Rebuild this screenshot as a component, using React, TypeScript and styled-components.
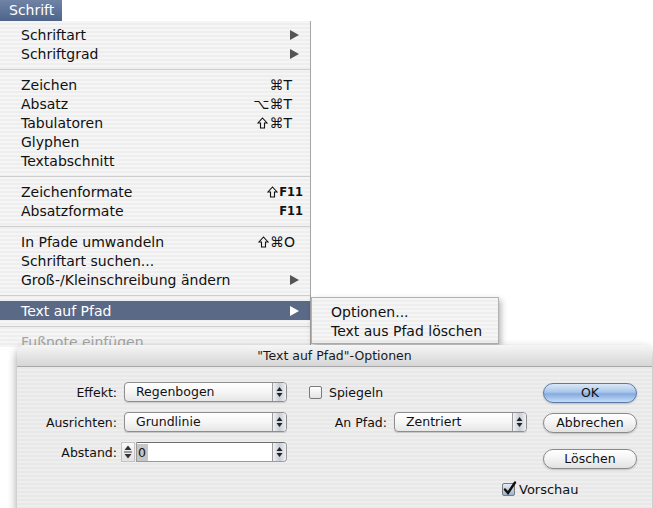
import styled, { createGlobalStyle } from "styled-components";

const GlobalStyle = createGlobalStyle`
  html, body {
    margin: 0;
    padding: 0;
    background: #fff;
  }
  body {
    font-family: "DejaVu Sans", "Liberation Sans", sans-serif;
    color: #111;
  }
`;

// screen + menu

const Screen = styled.div`
  position: relative;
  width: 653px;
  height: 508px;
  overflow: hidden;
  background: #fff;
`;

const MenuTitle = styled.div`
  box-sizing: border-box;
  width: 62px;
  height: 21px;
  padding-left: 9px;
  background: linear-gradient(#6f83a6, #4f648a);
  color: #fff;
  font-size: 14px;
  line-height: 21px;
`;

const Menu = styled.div`
  box-sizing: border-box;
  width: 311px;
  height: 326px;
  padding-top: 4px;
  overflow: hidden;
  border-right: 1px solid #a4a4a4;
  background: repeating-linear-gradient(#f5f5f5 0 2px, #eeeeee 2px 4px);
`;

const Item = styled.div<{ $active?: boolean; $disabled?: boolean }>`
  display: flex;
  align-items: center;
  height: 19px;
  padding-left: 21px;
  font-size: 14px;
  white-space: nowrap;
  color: ${({ $active, $disabled }) => ($active ? "#fff" : $disabled ? "#a4a4a4" : "#111")};
  background: ${({ $active }) => ($active ? "#5a6986" : "transparent")};
`;

const Shortcut = styled.span<{ $inset: number; $small?: boolean }>`
  display: flex;
  align-items: center;
  gap: 1px;
  margin-left: auto;
  padding-right: ${({ $inset }) => $inset}px;
  font-size: ${({ $small }) => ($small ? "11.5px" : "14px")};
  font-weight: ${({ $small }) => ($small ? "bold" : "normal")};
`;

const Arrow = styled.span<{ $active?: boolean }>`
  margin-left: auto;
  margin-right: 11px;
  width: 0;
  height: 0;
  border-top: 5px solid transparent;
  border-bottom: 5px solid transparent;
  border-left: 9px solid ${({ $active }) => ($active ? "#fff" : "#555")};
`;

const Separator = styled.div`
  display: flex;
  align-items: center;
  height: 12px;

  &::before {
    content: "";
    flex: 1;
    height: 1px;
    background: #cdcdcd;
  }
`;

const SubMenu = styled.div`
  position: absolute;
  left: 311px;
  top: 297px;
  box-sizing: border-box;
  width: 188px;
  height: 47px;
  padding-top: 5px;
  border: 1px solid #b2b2b2;
  background: repeating-linear-gradient(#f5f5f5 0 2px, #eeeeee 2px 4px);
  box-shadow: 2px 3px 6px rgba(0, 0, 0, 0.3);
`;

const SubItem = styled.div`
  height: 19px;
  line-height: 19px;
  padding-left: 19px;
  font-size: 14px;
  white-space: nowrap;
`;

// dialog

const Dialog = styled.div`
  position: absolute;
  left: 17px;
  top: 345px;
  width: 635px;
  height: 170px;
  border-radius: 8px 8px 0 0;
  overflow: hidden;
  background: repeating-linear-gradient(#eeeeee 0 2px, #e8e8e8 2px 4px);
  box-shadow: 0 4px 10px rgba(0, 0, 0, 0.4);
  font-size: 12.5px;
`;

const TitleBar = styled.div`
  height: 21px;
  line-height: 21px;
  text-align: center;
  font-size: 12.5px;
  color: #1a1a1a;
  background: linear-gradient(#f6f6f6, #e2e2e2 60%, #d6d6d6);
  border-bottom: 1px solid #a8a8a8;
`;

const Body = styled.div`
  display: grid;
  grid-template-columns: 510px 94px;
  column-gap: 16px;
  padding-top: 15px;
`;

const Form = styled.div`
  display: grid;
  grid-template-columns: 100px 163px 1fr;
  grid-auto-rows: 20px;
  column-gap: 7px;
  row-gap: 10px;
  align-items: center;
`;

const Label = styled.span`
  text-align: right;
  white-space: nowrap;
`;

const Inline = styled.div<{ $end?: boolean }>`
  display: flex;
  align-items: center;
  gap: 7px;
  justify-content: ${({ $end }) => ($end ? "flex-end" : "flex-start")};
  padding-left: ${({ $end }) => ($end ? 0 : 15)}px;
`;

const Popup = styled.div<{ $width: number }>`
  box-sizing: border-box;
  display: flex;
  width: ${({ $width }) => $width}px;
  height: 20px;
  border: 1px solid #8e8e8e;
  border-radius: 4px;
  overflow: hidden;
  background: linear-gradient(#ffffff, #f6f6f6 50%, #e6e6e6);
  box-shadow: 0 1px 1px rgba(0, 0, 0, 0.15);
`;

const PopupText = styled.span`
  flex: 1;
  padding-left: 11px;
  line-height: 18px;
`;

const ArrowBox = styled.span`
  width: 13px;
  display: flex;
  align-items: center;
  justify-content: center;
  border-left: 1px solid #9a9a9a;
  background: linear-gradient(90deg, #f2f2f2, #c9ced8 50%, #eef0f4);
`;

const NumberField = styled.div`
  display: flex;
  align-items: center;
  margin-left: -3px;
  width: 166px;
  height: 20px;
`;

const Stepper = styled.span`
  box-sizing: border-box;
  width: 14px;
  height: 20px;
  display: flex;
  align-items: center;
  justify-content: center;
  border: 1px solid #c4c4c4;
  background: linear-gradient(#fafafa, #e2e2e2);
`;

const Field = styled.div`
  box-sizing: border-box;
  flex: 1;
  display: flex;
  height: 20px;
  margin-left: 1px;
  border: 1px solid #9a9a9a;
  border-top-color: #6e6e6e;
  border-radius: 0 4px 4px 0;
  background: #fff;
  overflow: hidden;
`;

const Selected = styled.span`
  align-self: center;
  padding: 1px 2px 1px 1px;
  background: #c6c6c6;
  line-height: 15px;
`;

const Spacer = styled.span`
  flex: 1;
`;

const Check = styled.span<{ $checked?: boolean }>`
  position: relative;
  box-sizing: border-box;
  width: 13px;
  height: 13px;
  border: 1px solid #7a7a7a;
  border-radius: 2px;
  background: ${({ $checked }) =>
    $checked ? "linear-gradient(#e4ecf6, #9fb3cf)" : "linear-gradient(#ffffff, #e4e4e4)"};
  flex-shrink: 0;

  svg {
    position: absolute;
    left: 0;
    top: -3px;
  }
`;

const Buttons = styled.div`
  display: flex;
  flex-direction: column;
  padding-top: 1px;
`;

const Button = styled.div<{ $primary?: boolean; $gap: number }>`
  box-sizing: border-box;
  height: 20px;
  margin-top: ${({ $gap }) => $gap}px;
  border: 1px solid ${({ $primary }) => ($primary ? "#5b7aa6" : "#8a8a8a")};
  border-radius: 10px;
  text-align: center;
  line-height: 18px;
  background: ${({ $primary }) =>
    $primary
      ? "linear-gradient(#dbe8f8, #a9c6ea 45%, #85abe0 55%, #c6dcf6)"
      : "linear-gradient(#ffffff, #f3f3f3 50%, #e2e2e2)"};
  box-shadow: 0 1px 2px rgba(0, 0, 0, 0.2);
`;

const Preview = styled.div`
  grid-column: 1 / -1;
  display: flex;
  align-items: center;
  gap: 4px;
  margin-top: 13px;
  padding-left: 485px;
  font-size: 13px;
`;

function UpDown() {
  return (
    <svg width="7" height="12" viewBox="0 0 7 12">
      <path d="M3.5 1 L6.5 5 L0.5 5 Z" fill="#222" />
      <path d="M3.5 11 L6.5 7 L0.5 7 Z" fill="#222" />
    </svg>
  );
}

function StepperArrows() {
  return (
    <svg width="10" height="16" viewBox="0 0 10 16">
      <path d="M5 1.5 L8.5 6 L1.5 6 Z" fill="#333" />
      <line x1="1" y1="8" x2="9" y2="8" stroke="#444" strokeWidth="1" />
      <path d="M5 14.5 L8.5 10 L1.5 10 Z" fill="#333" />
    </svg>
  );
}

function ShiftIcon({ bold }: { bold?: boolean }) {
  return (
    <svg width="11" height="12" viewBox="0 0 11 12">
      <path
        d="M5.5 1 L10 6 L7.5 6 L7.5 11 L3.5 11 L3.5 6 L1 6 Z"
        fill="none"
        stroke="#111"
        strokeWidth={bold ? 1.4 : 1.1}
        strokeLinejoin="miter"
      />
    </svg>
  );
}

function CheckMark() {
  return (
    <svg width="14" height="15" viewBox="0 0 14 15">
      <path d="M2 8.5 L5 12 L12 1.5" stroke="#111" strokeWidth="2.4" fill="none" strokeLinecap="round" />
    </svg>
  );
}

export default function App() {
  return (
    <>
      <GlobalStyle />
      <Screen>
        <MenuTitle>Schrift</MenuTitle>
        <Menu>
          <Item>
            Schriftart
            <Arrow />
          </Item>
          <Item>
            Schriftgrad
            <Arrow />
          </Item>
          <Separator />
          <Item>
            Zeichen<Shortcut $inset={18}>⌘T</Shortcut>
          </Item>
          <Item>
            Absatz<Shortcut $inset={18}>⌥⌘T</Shortcut>
          </Item>
          <Item>
            Tabulatoren
            <Shortcut $inset={18}>
              <ShiftIcon />
              ⌘T
            </Shortcut>
          </Item>
          <Item>Glyphen</Item>
          <Item>Textabschnitt</Item>
          <Separator />
          <Item>
            Zeichenformate
            <Shortcut $inset={7} $small>
              <ShiftIcon />
              F11
            </Shortcut>
          </Item>
          <Item>
            Absatzformate
            <Shortcut $inset={7} $small>
              F11
            </Shortcut>
          </Item>
          <Separator />
          <Item>
            In Pfade umwandeln
            <Shortcut $inset={15}>
              <ShiftIcon />
              ⌘O
            </Shortcut>
          </Item>
          <Item>Schriftart suchen...</Item>
          <Item>
            Groß-/Kleinschreibung ändern
            <Arrow />
          </Item>
          <Separator />
          <Item $active>
            Text auf Pfad
            <Arrow $active />
          </Item>
          <Separator />
          <Item $disabled>Fußnote einfügen</Item>
        </Menu>

        <SubMenu>
          <SubItem>Optionen...</SubItem>
          <SubItem>Text aus Pfad löschen</SubItem>
        </SubMenu>

        <Dialog>
          <TitleBar>"Text auf Pfad"-Optionen</TitleBar>
          <Body>
            <Form>
              <Label>Effekt:</Label>
              <Popup $width={163}>
                <PopupText>Regenbogen</PopupText>
                <ArrowBox>
                  <UpDown />
                </ArrowBox>
              </Popup>
              <Inline>
                <Check />
                Spiegeln
              </Inline>

              <Label>Ausrichten:</Label>
              <Popup $width={163}>
                <PopupText>Grundlinie</PopupText>
                <ArrowBox>
                  <UpDown />
                </ArrowBox>
              </Popup>
              <Inline $end>
                An Pfad:
                <Popup $width={133}>
                  <PopupText>Zentriert</PopupText>
                  <ArrowBox>
                    <UpDown />
                  </ArrowBox>
                </Popup>
              </Inline>

              <Label>Abstand:</Label>
              <NumberField>
                <Stepper>
                  <StepperArrows />
                </Stepper>
                <Field>
                  <Selected>0</Selected>
                  <Spacer />
                  <ArrowBox>
                    <UpDown />
                  </ArrowBox>
                </Field>
              </NumberField>
            </Form>

            <Buttons>
              <Button $primary $gap={0}>
                OK
              </Button>
              <Button $gap={10}>Abbrechen</Button>
              <Button $gap={16}>Löschen</Button>
            </Buttons>

            <Preview>
              <Check $checked>
                <CheckMark />
              </Check>
              Vorschau
            </Preview>
          </Body>
        </Dialog>
      </Screen>
    </>
  );
}
